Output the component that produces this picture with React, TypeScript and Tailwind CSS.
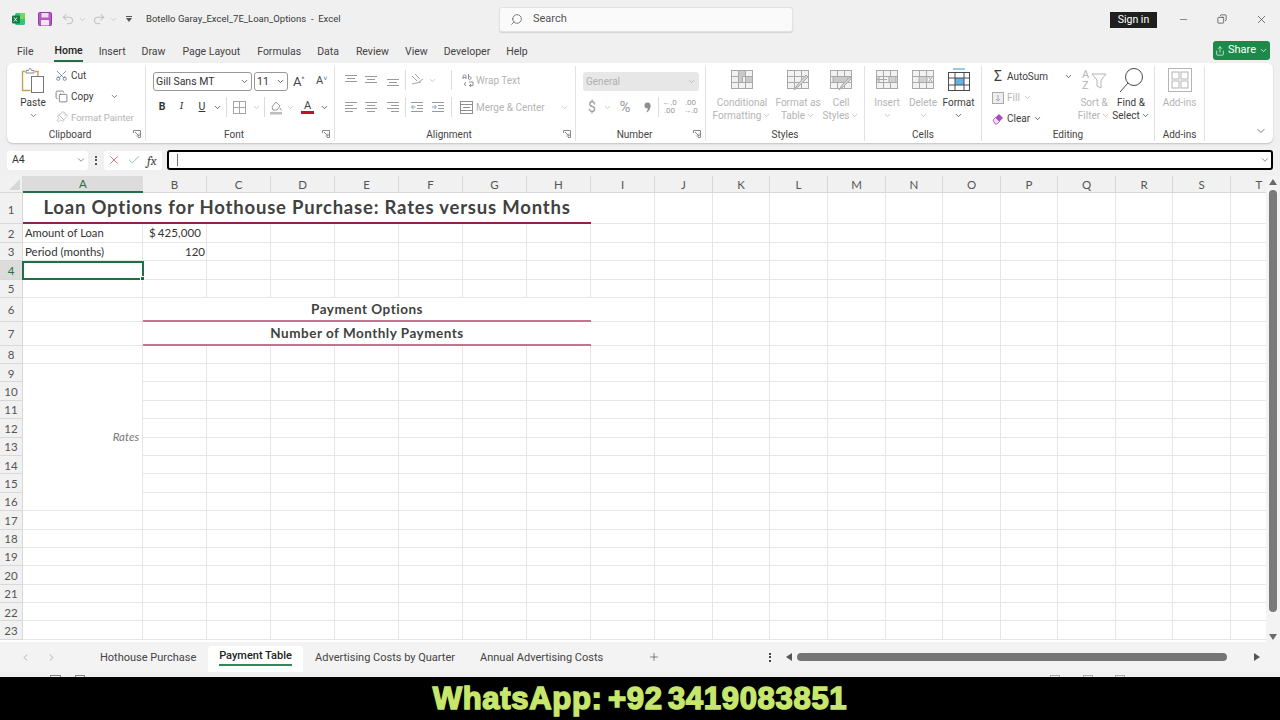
import type { ReactNode } from "react";
import {
  Check,
  ChevronDown,
  ChevronLeft,
  ChevronRight,
  Copy,
  Minus,
  PaintbrushVertical,
  Plus,
  Scissors,
  Search,
  Share,
  Undo2,
  Redo2,
  X,
} from "lucide-react";

const ui = "font-['Roboto','Open_Sans',sans-serif]";
const gill = "font-['Lato','Open_Sans',sans-serif]";

const columns = ["A", "B", "C", "D", "E", "F", "G", "H", "I", "J", "K", "L", "M", "N", "O", "P", "Q", "R", "S", "T"];
const tail = columns.slice(8);

function Chev({ className = "" }: { className?: string }) {
  return <ChevronDown className={"w-[9px] h-[9px] shrink-0 " + className} strokeWidth={2} />;
}

function Lines({ kind, color = "#9a9a9a" }: { kind: "top" | "mid" | "bot" | "left" | "center" | "right"; color?: string }) {
  const ys = kind === "top" ? [2, 5, 8] : kind === "mid" ? [3, 6, 9] : kind === "bot" ? [6, 9, 12] : [2, 5, 8, 11];
  return (
    <svg width="14" height="14" viewBox="0 0 14 14" stroke={color} strokeWidth="1">
      {ys.map((y, i) => {
        const short = i % 2 === 1;
        let x1 = 1;
        let x2 = 13;
        if (kind === "left" && short) x2 = 9;
        if (kind === "right" && short) x1 = 5;
        if ((kind === "center" || kind === "top" || kind === "mid" || kind === "bot") && short) {
          x1 = 3;
          x2 = 11;
        }
        return <line key={y} x1={x1} x2={x2} y1={y + 0.5} y2={y + 0.5} />;
      })}
    </svg>
  );
}

function Indent({ flip }: { flip?: boolean }) {
  return (
    <svg width="14" height="14" viewBox="0 0 14 14" fill="none" stroke="#9a9a9a">
      <path d="M1 2.5h12M7 5.5h6M7 8.5h6M1 11.5h12" />
      <path d={flip ? "M1 7h4M3.5 5l2 2-2 2" : "M1.5 7h4M3.5 5l-2 2 2 2"} stroke="#7fa3c4" />
    </svg>
  );
}

function Launcher() {
  return (
    <svg width="8" height="8" viewBox="0 0 8 8" fill="none" stroke="#8a8a8a">
      <path d="M.5 3V.5H7.5V7.5H5M2 2l4 4M6 3.5V6H3.5" />
    </svg>
  );
}

function Group({ width, label, launcher, children, last }: { width: string; label: string; launcher?: boolean; children: ReactNode; last?: boolean }) {
  return (
    <div className={width + " shrink-0 flex flex-col h-full pt-[3px] pb-[2px]"}>
      <div className={"flex-1 min-h-0 " + (last ? "" : "border-r border-[#e3e3e3]")}>{children}</div>
      <div className={"h-[14px] flex items-center text-[10px] text-[#444] " + (last ? "" : "border-r border-[#e3e3e3]")}>
        <span className="flex-1 text-center">{label}</span>
        {launcher && (
          <span className="w-[12px] flex">
            <Launcher />
          </span>
        )}
      </div>
    </div>
  );
}

function Slot({ w, children }: { w: string; children?: ReactNode }) {
  return <div className={w + " shrink-0 flex items-center justify-center"}>{children}</div>;
}

function Sep() {
  return <div className="w-px h-[20px] bg-[#dcdcdc] shrink-0" />;
}

function TableIcon({ variant }: { variant: "cond" | "fmt" | "cell" | "insert" | "delete" | "format" }) {
  const s = "#a9a9a9";
  if (variant === "format") {
    return (
      <svg width="24" height="24" viewBox="0 0 24 24" fill="none">
        <path d="M6 1h12" stroke="#3f8fc4" />
        <rect x="1.5" y="4.5" width="21" height="18" fill="#fff" stroke="#4a4a4a" />
        <rect x="8" y="10" width="9" height="7" fill="#63b3e3" />
        <path d="M1.5 10h21M1.5 17h21M8 4.5v18M17 4.5v18" stroke="#4a4a4a" />
      </svg>
    );
  }
  return (
    <svg width="24" height="22" viewBox="0 0 24 22" fill="none" stroke={s}>
      <rect x="1.5" y="1.5" width="21" height="18" fill="#f2f2f2" />
      <path d="M1.5 7.5h21M1.5 13.5h21M8.5 1.5v18M15.5 1.5v18" />
      {variant === "cond" && <path d="M8.5 1.5h7v6h-3v6h-4zM15.5 7.5h7v6h-7z" fill="#c9c9c9" />}
      {variant === "fmt" && <path d="M8 21l4-6 8-9 2 2-9 9z" fill="#d4d4d4" />}
      {variant === "cell" && (
        <>
          <rect x="4" y="7.5" width="15" height="6" fill="#c9c9c9" />
          <path d="M10 21l3-5 8-8 1.5 1.5-8 8z" fill="#d4d4d4" />
        </>
      )}
      {variant === "insert" && <path d="M12 10.5H2M5 7.5l-3 3 3 3M14 7.5h7v6h-7z" fill="#d0d0d0" />}
      {variant === "delete" && <path d="M8 7.5h8v6H8zM17 7l5 7M22 7l-5 7" fill="#d0d0d0" />}
    </svg>
  );
}

function BigButton({ w, icon, lines, dark, chevron }: { w: string; icon: ReactNode; lines: string[]; dark?: boolean; chevron?: boolean }) {
  const color = dark ? "text-[#3c3c3c]" : "text-[#b4b4b4]";
  return (
    <div className={w + " shrink-0 flex flex-col items-center pt-[1px] leading-[13px] text-[10px] " + color}>
      <div className="h-[25px] flex items-center">{icon}</div>
      <div className="mt-[4px] whitespace-nowrap">{lines[0]}</div>
      <div className="whitespace-nowrap flex items-center gap-[1px] h-[13px]">
        {lines[1]}
        {chevron && <Chev />}
      </div>
    </div>
  );
}

function Sheet() {
  const cell = "border-r border-b border-[#e6e6e6]";
  const head = "border-r border-b border-[#d8d8d8] bg-[#f1f1f1] flex items-center justify-center pt-[1px] text-[11.5px] text-[#555] " + gill;
  const plainRow = (r: number, cols: string[]) => cols.map((c) => <div key={c + r} className={cell} />);

  const rows: ReactNode[] = [];
  // row 1, title merged across A:H
  rows.push(
    <div key="h1" className={head + " !pt-[3px]"}>1</div>,
    <div key="title" className={"col-span-8 border-b-2 border-[#8d2450] flex items-center justify-center pt-[1px] text-[18.5px] font-bold tracking-[0.8px] text-[#3f4240] " + gill}>
      Loan Options for Hothouse Purchase: Rates versus Months
    </div>,
    ...plainRow(1, tail)
  );
  // row 2
  rows.push(
    <div key="h2" className={head}>2</div>,
    <div key="a2" className={cell + " flex items-center pl-[2px] text-[11.2px] text-[#333] " + gill}>Amount of Loan</div>,
    <div key="b2" className={cell + " flex items-center justify-between pl-[6px] pr-[5px] text-[11.5px] tracking-[0.1px] text-[#333] " + gill}>
      <span>$</span>
      <span>425,000</span>
    </div>,
    ...plainRow(2, columns.slice(2))
  );
  // row 3
  rows.push(
    <div key="h3" className={head}>3</div>,
    <div key="a3" className={cell + " flex items-center pl-[2px] text-[11.5px] text-[#333] " + gill}>Period (months)</div>,
    <div key="b3" className={cell + " flex items-center justify-end pr-[1px] text-[11.5px] text-[#333] " + gill}>120</div>,
    ...plainRow(3, columns.slice(2))
  );
  // row 4, A4 selected
  rows.push(
    <div key="h4" className={head + " !bg-[#dcdcdc] !text-[#1f7145]"}>4</div>,
    <div key="a4" className="relative -mx-px border-2 border-[#1f7145]">
      <span className="absolute -right-[3px] -bottom-[3px] w-[5px] h-[5px] bg-[#1f7145] border border-white" />
    </div>,
    ...plainRow(4, columns.slice(1))
  );
  // row 5
  rows.push(<div key="h5" className={head}>5</div>, ...plainRow(5, columns));
  // rows 6, 7 merged across B:H
  rows.push(
    <div key="h6" className={head}>6</div>,
    <div key="a6" className={cell} />,
    <div key="m6" className={"col-span-7 border-b-2 border-[#c7738f] flex items-center justify-center text-[13.5px] font-bold tracking-[0.5px] text-[#3f4240] " + gill}>Payment Options</div>,
    ...plainRow(6, tail),
    <div key="h7" className={head}>7</div>,
    <div key="a7" className={cell} />,
    <div key="m7" className={"col-span-7 border-b-2 border-[#c7738f] flex items-center justify-center text-[13.5px] font-bold tracking-[0.5px] text-[#3f4240] " + gill}>Number of Monthly Payments</div>,
    ...plainRow(7, tail)
  );
  rows.push(<div key="h8" className={head}>8</div>, ...plainRow(8, columns));
  // rows 9 to 16: A is merged, holds "Rates"
  for (let r = 9; r <= 23; r++) {
    rows.push(<div key={"h" + r} className={head}>{r}</div>);
    if (r === 9) {
      rows.push(
        <div key="rates" className={"row-span-8 border-r border-b border-[#e6e6e6] flex items-center justify-end pr-[3px] text-[11.5px] italic text-[#777] " + gill}>Rates</div>
      );
    }
    if (r > 16) rows.push(<div key={"a" + r} className={cell} />);
    rows.push(...plainRow(r, columns.slice(1)));
  }

  return (
    <div className="h-[466px] flex bg-white overflow-hidden">
      <div className="w-[1266px] overflow-hidden">
        <div className="grid w-[1288px] grid-cols-[23px_120px_64px_64px_64px_64px_64px_64px_64px_64px_58px_57px_58px_58px_57px_58px_57px_58px_57px_58px_57px] grid-rows-[17px_31px_19px_18px_19px_18px_24px_24px_18px_repeat(15,18.4px)] content-start">
          <div className="bg-[#f1f1f1] border-r border-b border-[#d8d8d8] flex items-end justify-end p-[2px]">
            <div className="w-0 h-0 border-l-[11px] border-l-transparent border-b-[11px] border-b-[#d6d6d6]" />
          </div>
          {columns.map((c) => (
            <div
              key={c}
              className={
                c === "A"
                  ? "bg-[#dcdcdc] border-b-2 border-[#1f7145] flex items-center justify-center pt-[1px] text-[11.5px] text-[#1f7145] " + gill
                  : head
              }
            >
              {c}
            </div>
          ))}
          {rows}
        </div>
      </div>
      <div className="w-[14px] bg-[#f3f3f3] flex flex-col items-center pt-[3px]">
        <div className="w-0 h-0 border-x-[4px] border-x-transparent border-b-[6px] border-b-[#6a6a6a]" />
        <div className="w-[8px] h-[422px] mt-[5px] rounded-full bg-[#7a7a7a]" />
        <div className="flex-1" />
        <div className="w-0 h-0 border-x-[4px] border-x-transparent border-t-[6px] border-t-[#6a6a6a] mb-[2px]" />
      </div>
    </div>
  );
}

export default function App() {
  return (
    <div className={"w-[1280px] h-[720px] flex flex-col overflow-hidden bg-[#f0f0f0] text-[#333] " + ui}>
      {/* title bar */}
      <div className="h-[38px] flex items-center shrink-0">
        <div className="w-[12px]" />
        <svg width="14" height="14" viewBox="0 0 14 14" className="shrink-0">
          <rect x="3" y="1" width="10" height="12" rx="1.5" fill="#33c481" />
          <rect x="8" y="1" width="5" height="6" fill="#7fd35a" />
          <rect x="0" y="3.5" width="8" height="8" rx="1" fill="#107c41" />
          <path d="M2 5.5l3 4M5 5.5l-3 4" stroke="#fff" strokeWidth=".9" />
        </svg>
        <div className="w-[12px]" />
        <svg width="14" height="14" viewBox="0 0 14 14" className="shrink-0">
          <rect x=".5" y=".5" width="13" height="13" rx="1" fill="#b45ac0" stroke="#8f3f9c" />
          <rect x="3.5" y="1" width="7" height="4.5" fill="#f2dcf5" />
          <rect x="3" y="8" width="8" height="5.5" fill="#f5e6f7" />
        </svg>
        <div className="w-[9px]" />
        <Undo2 className="w-[14px] h-[14px] text-[#b5b5b5]" strokeWidth={1.5} />
        <Chev className="ml-[3px] text-[#c2c2c2]" />
        <div className="w-[5px]" />
        <Redo2 className="w-[14px] h-[14px] text-[#b5b5b5]" strokeWidth={1.5} />
        <Chev className="ml-[3px] text-[#c2c2c2]" />
        <div className="w-[7px]" />
        <div className="flex flex-col items-center w-[8px]">
          <div className="w-[6px] h-px bg-[#555] mb-[1px]" />
          <div className="w-0 h-0 border-x-[3px] border-x-transparent border-t-[4px] border-t-[#555]" />
        </div>
        <div className="w-[13px]" />
        <div className="w-[353px] pt-[1px] text-[9.5px] whitespace-nowrap text-[#3a3a3a]">Botello Garay_Excel_7E_Loan_Options&nbsp; -&nbsp; Excel</div>
        <div className="w-[294px] h-[25px] shrink-0 bg-[#fafafa] border border-[#e2e2e2] rounded-[3px] shadow-[0_1px_1px_rgba(0,0,0,0.12)] flex items-center pl-[10px] pt-[1px] gap-[10px] text-[11px] text-[#555]">
          <Search className="w-[13px] h-[13px] -scale-x-100 text-[#666]" strokeWidth={1.5} />
          Search
        </div>
        <div className="flex-1" />
        <div className="w-[47px] h-[16px] mt-[1px] bg-[#1f1f1f] text-white text-[10.5px] flex items-center justify-center">Sign in</div>
        <div className="w-[7px]" />
        <Slot w="w-[38px]"><Minus className="w-[11px] h-[11px] text-[#444]" strokeWidth={1.3} /></Slot>
        <Slot w="w-[40px]"><Copy className="w-[10px] h-[10px] -scale-x-100 text-[#333]" strokeWidth={1.6} /></Slot>
        <Slot w="w-[38px]"><X className="w-[13px] h-[13px] text-[#444]" strokeWidth={1.3} /></Slot>
      </div>

      {/* ribbon tabs */}
      <div className="h-[25px] shrink-0 flex items-center text-[10.5px] text-[#444]">
        <div className="w-[17px]" />
        <span className="pt-[2px]">File</span>
        <span className="ml-[21px] mt-[5px] font-medium text-[#222] pb-[2px] border-b-2 border-[#1f7145] leading-[14px]">Home</span>
        <span className="ml-[16px] pt-[2px]">Insert</span>
        <span className="ml-[16px] pt-[2px]">Draw</span>
        <span className="ml-[17px] pt-[2px]">Page Layout</span>
        <span className="ml-[17px] pt-[2px]">Formulas</span>
        <span className="ml-[16px] pt-[2px]">Data</span>
        <span className="ml-[17px] pt-[2px]">Review</span>
        <span className="ml-[16px] pt-[2px]">View</span>
        <span className="ml-[16px] pt-[2px]">Developer</span>
        <span className="ml-[16px] pt-[2px]">Help</span>
        <div className="flex-1" />
        <div className="w-[57px] h-[19px] mr-[10px] rounded-[3px] bg-[#1e8a4a] text-white flex items-center justify-center gap-[3px] text-[11px]">
          <Share className="w-[10px] h-[10px]" strokeWidth={1.6} />
          Share
          <Chev />
        </div>
      </div>

      {/* ribbon */}
      <div className="h-[80px] shrink-0 mx-[7px] bg-white rounded-[6px] shadow-[0_1px_2px_rgba(0,0,0,0.2)] flex">
        <Group width="w-[139px]" label="Clipboard" launcher>
          <div className="flex h-full pl-[14px]">
            <div className="w-[24px] flex flex-col items-center text-[10px] leading-[12px] text-[#3c3c3c]">
              <svg width="24" height="26" viewBox="0 0 24 26" fill="none" className="shrink-0 mt-[2px]">
                <path d="M4 3.5H1.5v19h8" stroke="#c9a24c" strokeWidth="1.4" />
                <path d="M14 3.5h3V8" stroke="#c9a24c" strokeWidth="1.4" />
                <path d="M5 5V2.5h2.5l1-2h1l1 2H13V5z" fill="#fff" stroke="#8a8a8a" />
                <rect x="10.5" y="8.5" width="12" height="16" fill="#fff" stroke="#777" />
              </svg>
              <div className="mt-[3px]">Paste</div>
              <Chev className="mt-[2px] text-[#555]" />
            </div>
            <div className="ml-[10px] pt-[3px] flex flex-col gap-[8px] text-[10px] leading-[13px] text-[#3c3c3c]">
              <div className="flex items-center gap-[3px]">
                <Scissors className="w-[13px] h-[13px] -rotate-90 text-[#4d6b86]" strokeWidth={1.3} />
                Cut
              </div>
              <div className="flex items-center gap-[3px]">
                <Copy className="w-[13px] h-[13px] text-[#555]" strokeWidth={1.3} />
                Copy
                <Chev className="ml-[13px] text-[#555]" />
              </div>
              <div className="flex items-center gap-[3px] text-[9.5px] text-[#b4b4b4] whitespace-nowrap">
                <PaintbrushVertical className="w-[13px] h-[13px] rotate-45 text-[#aaa]" strokeWidth={1.3} />
                Format Painter
              </div>
            </div>
          </div>
        </Group>

        <Group width="w-[189px]" label="Font" launcher>
          <div className="pl-[7px] pt-[6px]">
            <div className="flex items-center h-[19px]">
              <div className="w-[99px] h-[19px] border border-[#999] rounded-[3px] flex items-center justify-between px-[2px] text-[10.5px] text-[#333]">
                Gill Sans MT
                <Chev />
              </div>
              <div className="w-[34px] h-[19px] ml-[2px] border border-[#999] rounded-[3px] flex items-center justify-between px-[2px] text-[10.5px] text-[#333]">
                11
                <Chev />
              </div>
              <span className="ml-[5px] text-[13px] text-[#444] w-[20px]">A<sup className="text-[7px]">^</sup></span>
              <span className="ml-[3px] text-[11px] text-[#444]">A<sup className="text-[7px] text-[#2b7cb8]">˅</sup></span>
            </div>
            <div className="flex items-center h-[20px] mt-[6px] text-[10.5px] text-[#333]">
              <Slot w="w-[18px]"><b>B</b></Slot>
              <Slot w="w-[21px]"><i className="font-serif">I</i></Slot>
              <Slot w="w-[20px]"><u>U</u></Slot>
              <Slot w="w-[10px]"><Chev /></Slot>
              <div className="w-[4px]" />
              <Sep />
              <Slot w="w-[24px]">
                <svg width="13" height="13" viewBox="0 0 13 13" fill="none" stroke="#a5a5a5"><rect x=".5" y=".5" width="12" height="12" /><path d="M6.5 0v13M0 6.5h13" /></svg>
              </Slot>
              <Slot w="w-[10px]"><Chev className="text-[#bbb]" /></Slot>
              <div className="w-[3px]" />
              <Sep />
              <Slot w="w-[22px]">
                <svg width="14" height="15" viewBox="0 0 14 15" fill="none"><path d="M3 7l4-5 4 4-3 4H4z" stroke="#9a9a9a" /><path d="M11 8l1.5 2.5" stroke="#9a9a9a" /><rect x="1" y="12" width="12" height="2.5" fill="#bdbdbd" /></svg>
              </Slot>
              <Slot w="w-[6px]"><Chev className="text-[#bbb]" /></Slot>
              <Slot w="w-[29px]">
                <div className="flex flex-col items-center leading-[10px]">
                  <span className="text-[11px] text-[#444]">A</span>
                  <span className="w-[13px] h-[3px] bg-[#c8102e]" />
                </div>
              </Slot>
              <Slot w="w-[4px]"><Chev /></Slot>
            </div>
          </div>
        </Group>

        <Group width="w-[241px]" label="Alignment" launcher>
          <div className="pl-[6px] pt-[4px]">
            <div className="flex items-center h-[20px] text-[10px] text-[#b4b4b4]">
              <Slot w="w-[20px]"><Lines kind="top" /></Slot>
              <Slot w="w-[20px]"><Lines kind="mid" /></Slot>
              <Slot w="w-[24px]"><Lines kind="bot" /></Slot>
              <Sep />
              <Slot w="w-[22px]">
                <svg width="14" height="14" viewBox="0 0 14 14" fill="none" stroke="#a5a5a5"><path d="M2 3l5 5M5 1l5 5M9 9l4-3M2 11l9-2" /></svg>
              </Slot>
              <Slot w="w-[8px]"><Chev className="text-[#bbb]" /></Slot>
              <div className="w-[15px]" />
              <Sep />
              <div className="flex items-center gap-[1px] ml-[9px]">
                <svg width="14" height="14" viewBox="0 0 14 14" fill="none" stroke="#8a8fa0" className="shrink-0">
                  <path d="M2 6V3.5a1.5 1.5 0 0 1 3 0V6M2 4.5h3M7.5 1v5M7.5 4a1.5 1.5 0 1 1 0 2M5 9.5a1.5 1.5 0 1 0 0 3M8 9h4v3.5H8.5M10 11l-1.5 1.5L10 14" />
                </svg>
                Wrap Text
              </div>
            </div>
            <div className="flex items-center h-[20px] mt-[7px] text-[10px] text-[#b4b4b4]">
              <Slot w="w-[20px]"><Lines kind="left" /></Slot>
              <Slot w="w-[20px]"><Lines kind="center" /></Slot>
              <Slot w="w-[24px]"><Lines kind="right" /></Slot>
              <Sep />
              <Slot w="w-[21px]"><Indent /></Slot>
              <Slot w="w-[21px]"><Indent flip /></Slot>
              <div className="w-[3px]" />
              <Sep />
              <div className="flex items-center ml-[8px] gap-[3px] whitespace-nowrap">
                <svg width="13" height="13" viewBox="0 0 13 13" fill="none" stroke="#8f8f8f" className="shrink-0"><rect x=".5" y=".5" width="12" height="12" /><path d="M0 3.5h13M0 9.5h13M3 6.5h7" /></svg>
                Merge &amp; Center
                <Chev className="ml-[12px] text-[#bbb]" />
              </div>
            </div>
          </div>
        </Group>

        <Group width="w-[130px]" label="Number" launcher>
          <div className="pl-[7px] pt-[6px]">
            <div className="w-[116px] h-[19px] bg-[#e7e7e7] rounded-[3px] flex items-center justify-between px-[3px] text-[10px] text-[#b0b0b0]">
              General
              <Chev />
            </div>
            <div className="flex items-center h-[20px] mt-[6px] text-[#9a9a9a]">
              <Slot w="w-[18px]"><span className="text-[14px]">$</span></Slot>
              <Slot w="w-[12px]"><Chev className="text-[#bbb]" /></Slot>
              <Slot w="w-[24px]"><span className="text-[15px]">%</span></Slot>
              <Slot w="w-[20px]">
                <svg width="7" height="11" viewBox="0 0 7 11" fill="#8f8f8f"><circle cx="3.5" cy="3.5" r="3" /><path d="M6.5 3.5C6.5 7 5 9.5 2 10.5 3.5 8.500 4 7 4 5z" /></svg>
              </Slot>
              <div className="w-px" />
              <Sep />
              <Slot w="w-[21px]"><span className="text-[8px] leading-[8px] text-center">←.0<br />.00</span></Slot>
              <Slot w="w-[21px]"><span className="text-[8px] leading-[8px] text-center">.00<br />→.0</span></Slot>
            </div>
          </div>
        </Group>

        <Group width="w-[159px]" label="Styles">
          <div className="flex">
            <BigButton w="w-[72px]" icon={<TableIcon variant="cond" />} lines={["Conditional", "Formatting"]} chevron />
            <BigButton w="w-[40px]" icon={<TableIcon variant="fmt" />} lines={["Format as", "Table"]} chevron />
            <BigButton w="w-[46px]" icon={<TableIcon variant="cell" />} lines={["Cell", "Styles"]} chevron />
          </div>
        </Group>

        <Group width="w-[117px]" label="Cells">
          <div className="flex pl-[4px]">
            <BigButton w="w-[36px]" icon={<TableIcon variant="insert" />} lines={["Insert", ""]} chevron />
            <BigButton w="w-[36px]" icon={<TableIcon variant="delete" />} lines={["Delete", ""]} chevron />
            <BigButton w="w-[35px]" dark icon={<TableIcon variant="format" />} lines={["Format", ""]} chevron />
          </div>
        </Group>

        <Group width="w-[173px]" label="Editing">
          <div className="flex pl-[10px] h-full">
            <div className="w-[84px] pt-[4px] flex flex-col gap-[8px] text-[10px] leading-[13px] text-[#3c3c3c]">
              <div className="flex items-center gap-[3px]">
                <span className="text-[14px] w-[12px] text-center leading-[13px]">Σ</span>
                AutoSum
                <Chev className="ml-[13px]" />
              </div>
              <div className="flex items-center gap-[3px] text-[#b4b4b4]">
                <svg width="12" height="12" viewBox="0 0 12 12" fill="none" stroke="#aaa" className="shrink-0"><rect x=".5" y=".5" width="11" height="11" fill="#eee" /><path d="M6 3v6M4 7l2 2 2-2" /></svg>
                Fill
                <Chev />
              </div>
              <div className="flex items-center gap-[3px]">
                <svg width="12" height="12" viewBox="0 0 12 12" className="shrink-0"><path d="M1 7l6-6 4 4-6 6H3z" fill="#a64cc0" /><path d="M1 7l2.5-2.500 4 4L5 11H3z" fill="#f3dcf7" stroke="#a64cc0" strokeWidth=".7" /></svg>
                Clear
                <Chev />
              </div>
            </div>
            <BigButton
              w="w-[36px]"
              icon={
                <svg width="26" height="24" viewBox="0 0 26 24" fill="none" stroke="#b4b4b4">
                  <path d="M11 6h14l-5 6v8l-4-2v-6z" />
                  <text x="1" y="10" fontSize="11" fill="#b4b4b4" stroke="none">A</text>
                  <text x="1" y="21" fontSize="11" fill="#b4b4b4" stroke="none">Z</text>
                </svg>
              }
              lines={["Sort &", "Filter"]}
              chevron
            />
            <BigButton
              w="w-[38px]"
              dark
              icon={
                <svg width="26" height="26" viewBox="0 0 26 26" fill="none" stroke="#4a4a4a">
                  <circle cx="16" cy="10" r="8.500" />
                  <path d="M10 16L2 25" />
                </svg>
              }
              lines={["Find &", "Select"]}
              chevron
            />
          </div>
        </Group>

        <Group width="w-[50px]" label="Add-ins">
          <BigButton
            w="w-[49px]"
            icon={
              <svg width="24" height="24" viewBox="0 0 24 24" fill="none" stroke="#b4b4b4">
                <rect x=".5" y=".5" width="23" height="23" />
                <rect x="4" y="4" width="7" height="7" />
                <rect x="13" y="4" width="7" height="7" />
                <rect x="4" y="13" width="7" height="7" />
                <rect x="13" y="13" width="7" height="7" />
              </svg>
            }
            lines={["Add-ins", ""]}
          />
        </Group>

        <div className="flex-1 flex items-end justify-end pr-[6px] pb-[6px]">
          <ChevronDown className="w-[12px] h-[12px] text-[#444]" strokeWidth={1.5} />
        </div>
      </div>

      {/* formula bar */}
      <div className="h-[20px] mt-[7px] shrink-0 flex items-center">
        <div className="w-[7px]" />
        <div className="w-[81px] h-[19px] bg-white rounded-[3px] flex items-center justify-between pl-[5px] pr-[2px] text-[10.5px] text-[#333]">
          A4
          <ChevronDown className="w-[10px] h-[10px] text-[#555]" strokeWidth={1.6} />
        </div>
        <Slot w="w-[16px]">
          <span className="flex flex-col gap-[1.5px]">
            <span className="w-[2px] h-[2px] bg-[#555]" />
            <span className="w-[2px] h-[2px] bg-[#555]" />
            <span className="w-[2px] h-[2px] bg-[#555]" />
          </span>
        </Slot>
        <div className="w-[58px] h-[19px] bg-white rounded-[3px] flex items-center pl-[3px] gap-[6px]">
          <X className="w-[14px] h-[14px] text-[#c9605a]" strokeWidth={1.4} />
          <Check className="w-[14px] h-[14px] text-[#7fb48f]" strokeWidth={1.4} />
          <span className="font-serif italic text-[13px] text-[#444] leading-none">fx</span>
        </div>
        <div className="w-[5px]" />
        <div className="w-[1106px] h-[20px] bg-white border-2 border-black rounded-[3px] flex items-center justify-between pl-[8px] pr-[1px]">
          <span className="w-px h-[12px] bg-[#777]" />
          <ChevronDown className="w-[10px] h-[10px] text-[#555]" strokeWidth={1.6} />
        </div>
      </div>

      <div className="h-[6px] shrink-0" />
      <Sheet />

      {/* sheet tabs */}
      <div className="h-[30px] shrink-0 bg-[#f3f3f3] flex items-center text-[11px] text-[#444]">
        <Slot w="w-[38px]"><ChevronLeft className="w-[11px] h-[11px] ml-[12px] text-[#aaa]" /></Slot>
        <Slot w="w-[26px]"><ChevronRight className="w-[11px] h-[11px] text-[#aaa]" /></Slot>
        <div className="w-[36px]" />
        <div className="w-[108px] whitespace-nowrap pt-[3px]">Hothouse Purchase</div>
        <div className="w-[95px] h-[26px] mt-[4px] pt-[1px] bg-white rounded-t-[4px] flex flex-col items-center text-[#222] font-medium">
          <span className="border-b-2 border-[#2f8a5b] leading-[17px] whitespace-nowrap">Payment Table</span>
        </div>
        <div className="w-[12px]" />
        <div className="w-[165px] whitespace-nowrap pt-[3px]">Advertising Costs by Quarter</div>
        <div className="w-[146px] whitespace-nowrap pt-[3px]">Annual Advertising Costs</div>
        <Plus className="w-[12px] h-[12px] ml-[22px] text-[#555]" strokeWidth={1.4} />
        <div className="w-[111px] flex justify-end">
          <span className="flex flex-col gap-[1.5px]">
            <span className="w-[2px] h-[2px] bg-[#444]" />
            <span className="w-[2px] h-[2px] bg-[#444]" />
            <span className="w-[2px] h-[2px] bg-[#444]" />
          </span>
        </div>
        <div className="w-[15px]" />
        <div className="w-0 h-0 border-y-[4px] border-y-transparent border-r-[6px] border-r-[#555]" />
        <div className="w-[430px] h-[8px] ml-[5px] rounded-full bg-[#757575]" />
        <div className="w-[27px]" />
        <div className="w-0 h-0 border-y-[4px] border-y-transparent border-l-[6px] border-l-[#555]" />
      </div>

      {/* status bar, cut off by the caption */}
      <div className="h-[5px] shrink-0 overflow-hidden bg-[#f0f0f0] flex pl-[9px] text-[10px] leading-[13px] text-[#555] pt-[3px]">
        <span>Edit</span>
        <div className="w-[11px] h-[4px] ml-[24px] border border-[#888]" />
        <div className="w-[10px] h-[4px] ml-[14px] border border-[#888]" />
        <span className="ml-[5px]">Accessibility: Investigate</span>
        <div className="w-[10px] h-[4px] ml-[850px] border border-[#aaa]" />
        <div className="w-[10px] h-[4px] ml-[23px] border border-[#aaa]" />
        <div className="w-[10px] h-[4px] ml-[22px] border border-[#aaa]" />
      </div>

      {/* caption band */}
      <div className="flex-1 bg-black flex items-center justify-center">
        <span className="font-['Liberation_Sans',sans-serif] font-bold text-[31px] leading-none text-[#c6e66c] [-webkit-text-stroke:1.5px_#c6e66c] tracking-[0.7px] [word-spacing:-4px]">
          WhatsApp: +92 3419083851
        </span>
      </div>
    </div>
  );
}
